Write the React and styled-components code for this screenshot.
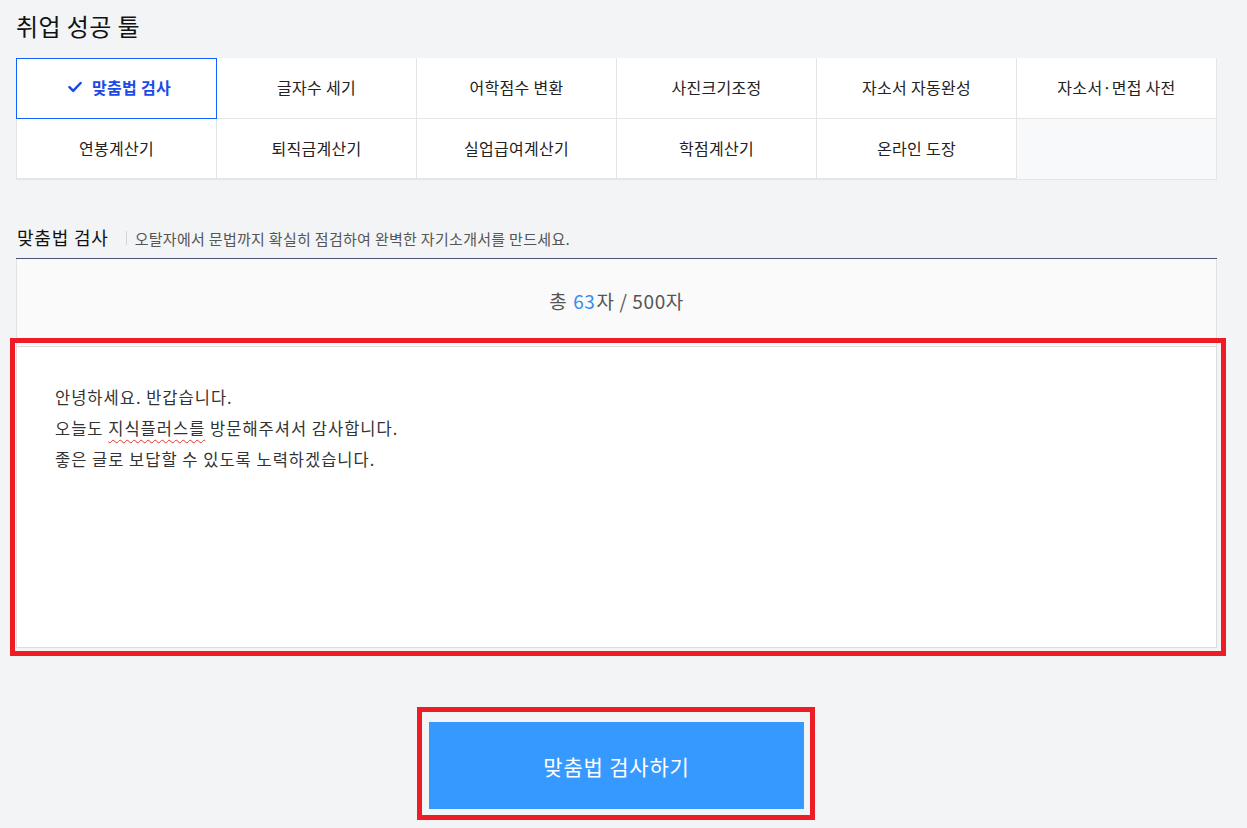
import React from "react";
import styled, { createGlobalStyle } from "styled-components";

const GlobalStyle = createGlobalStyle`
  html, body {
    margin: 0;
    padding: 0;
    background: #f3f4f6;
    font-family: "Noto Sans CJK KR", "Noto Sans", sans-serif;
    color: #222;
  }
`;

const Page = styled.div`
  width: 1201px;
  padding: 0 30px 40px 16px;
`;

const PageTitle = styled.h1`
  margin: 0;
  padding-top: 8px;
  height: 50px;
  font-size: 24px;
  font-weight: 400;
  line-height: 36px;
  color: #111;
  letter-spacing: 0.4px;
`;

const ToolGrid = styled.div`
  display: grid;
  grid-template-columns: repeat(6, 200px);
  grid-auto-rows: 60px;
  border: 1px solid #e6e6e6;
  background: #f8f9fb;
  width: 1199px;
`;

const ToolCell = styled.div`
  position: relative;
  box-sizing: border-box;
  display: flex;
  align-items: center;
  justify-content: center;
  gap: 10px;
  padding-bottom: 2px;
  padding-left: ${({ $active }) => ($active ? "6px" : "0")};
  background: #fff;
  border-right: 1px solid #e6e6e6;
  border-bottom: 1px solid #e6e6e6;
  font-size: 16px;
  letter-spacing: 0.3px;
  color: ${({ $active }) => ($active ? "#1b4ae6" : "#222")};
  font-weight: ${({ $active }) => ($active ? 700 : 400)};
  margin-top: ${({ $first }) => ($first ? "-1px" : "0")};
  height: ${({ $first }) => ($first ? "61px" : "60px")};

  &::after {
    content: "";
    display: ${({ $active }) => ($active ? "block" : "none")};
    position: absolute;
    top: 0;
    left: -1px;
    right: -1px;
    bottom: -1px;
    border: 1px solid #1160ff;
    pointer-events: none;
  }
`;

const CheckIcon = () => (
  <svg width="14" height="12" viewBox="0 0 14 12" fill="none">
    <path
      d="M1.5 6.2 L5.2 9.8 L12.6 2"
      stroke="#1b4ae6"
      strokeWidth="2.5"
      strokeLinecap="round"
      strokeLinejoin="round"
    />
  </svg>
);

const SectionHead = styled.div`
  display: flex;
  align-items: center;
  height: 42px;
  margin-top: 36px;
  padding-left: 1px;
`;

const SectionTitle = styled.h2`
  margin: 0;
  font-size: 18px;
  font-weight: 400;
  letter-spacing: 0.8px;
  color: #111;
`;

const Divider = styled.span`
  width: 1px;
  height: 14px;
  background: #d5d5d5;
  margin: 2px 8px 0 17px;
`;

const SectionDesc = styled.p`
  margin: 2px 0 0;
  font-size: 15px;
  letter-spacing: 0.3px;
  color: #555;
`;

const CheckerBox = styled.div`
  border-top: 1px solid #4a5474;
  width: 1201px;
`;

const Counter = styled.div`
  box-sizing: border-box;
  height: 87px;
  padding-bottom: 5px;
  background: #fafafa;
  border-left: 1px solid #e2e2e2;
  border-right: 1px solid #e2e2e2;
  display: flex;
  align-items: center;
  justify-content: center;
  font-size: 19px;
  letter-spacing: 0.6px;
  color: #555;
`;

const CountNum = styled.span`
  color: #3a8cf0;
  margin: 0 1px 0 6px;
`;

const Highlighted = styled.div`
  position: relative;

  &::after {
    content: "";
    position: absolute;
    top: ${({ $t }) => $t}px;
    left: ${({ $l }) => $l}px;
    right: ${({ $r }) => $r}px;
    bottom: ${({ $b }) => $b}px;
    border: 5px solid #ee1c25;
    pointer-events: none;
  }
`;

const TextBox = styled.div`
  box-sizing: border-box;
  height: 302px;
  background: #fff;
  border: 1px solid #dcdcdc;
  padding: 35px 38px;
  font-size: 16.5px;
  letter-spacing: 1px;
  line-height: 31px;
  color: #333;
  white-space: pre-line;
`;

const Misspelled = styled.span`
  text-decoration: underline wavy #e8322b;
  text-decoration-thickness: 1px;
  text-underline-offset: 4px;
`;

const ButtonRow = styled.div`
  display: flex;
  justify-content: center;
  margin-top: 74px;
`;

const SubmitButton = styled.button`
  display: block;
  width: 375px;
  height: 87px;
  border: none;
  background: #3699ff;
  color: #fff;
  font-family: inherit;
  font-size: 21px;
  letter-spacing: 0.8px;
  cursor: pointer;
`;

const tools = [
  "맞춤법 검사",
  "글자수 세기",
  "어학점수 변환",
  "사진크기조정",
  "자소서 자동완성",
  "자소서·면접 사전",
  "연봉계산기",
  "퇴직금계산기",
  "실업급여계산기",
  "학점계산기",
  "온라인 도장",
];

const App = () => {
  return (
    <>
      <GlobalStyle />
      <Page>
        <PageTitle>취업 성공 툴</PageTitle>

        <ToolGrid>
          {tools.map((name, i) => (
            <ToolCell key={name} $active={i === 0} $first={i < 6}>
              {i === 0 && <CheckIcon />}
              {name}
            </ToolCell>
          ))}
        </ToolGrid>

        <SectionHead>
          <SectionTitle>맞춤법 검사</SectionTitle>
          <Divider />
          <SectionDesc>
            오탈자에서 문법까지 확실히 점검하여 완벽한 자기소개서를 만드세요.
          </SectionDesc>
        </SectionHead>

        <CheckerBox>
          <Counter>
            총<CountNum>63</CountNum>자 / 500자
          </Counter>
          <Highlighted $t={-8} $l={-6} $r={-9} $b={-8}>
            <TextBox>
              안녕하세요. 반갑습니다.
              {"\n"}오늘도 <Misspelled>지식플러스를</Misspelled> 방문해주셔서
              감사합니다.
              {"\n"}좋은 글로 보답할 수 있도록 노력하겠습니다.
            </TextBox>
          </Highlighted>
        </CheckerBox>

        <ButtonRow>
          <Highlighted $t={-15} $l={-12} $r={-11} $b={-11}>
            <SubmitButton>맞춤법 검사하기</SubmitButton>
          </Highlighted>
        </ButtonRow>
      </Page>
    </>
  );
};

export default App;
